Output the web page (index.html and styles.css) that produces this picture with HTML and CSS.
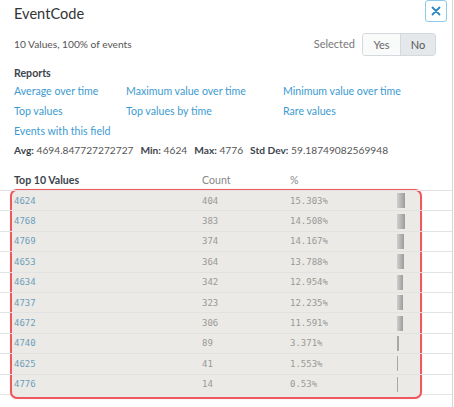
FILE: index.html
```html
<!DOCTYPE html>
<html>
<head>
<meta charset="utf-8">
<link rel="stylesheet" href="styles.css">
</head>
<body>
<div class="modal">
  <header class="head">
    <h1 class="title">EventCode</h1>
    <button class="close" aria-label="Close">
      <svg width="10" height="10" viewBox="0 0 10 10"><path d="M1.5 1.5 L8.5 8.5 M8.5 1.5 L1.5 8.5" stroke="#2b87c2" stroke-width="1.8" stroke-linecap="round"/></svg>
    </button>
  </header>
  <div class="summary">
    <span class="summary-text">10 Values, 100% of events</span>
    <div class="selected">
      <span class="selected-label">Selected</span>
      <div class="btn-group">
        <button class="btn">Yes</button>
        <button class="btn active">No</button>
      </div>
    </div>
  </div>
  <section class="reports">
    <h2 class="reports-title">Reports</h2>
    <div class="links">
      <a class="link">Average over time</a>
      <a class="link">Maximum value over time</a>
      <a class="link">Minimum value over time</a>
      <a class="link">Top values</a>
      <a class="link">Top values by time</a>
      <a class="link">Rare values</a>
      <a class="link">Events with this field</a>
    </div>
  </section>
  <div class="stats">
    <span><b>Avg:</b> 4694.847727272727</span>
    <span><b>Min:</b> 4624</span>
    <span><b>Max:</b> 4776</span>
    <span><b>Std Dev:</b> 59.18749082569948</span>
  </div>
  <div class="table">
    <div class="thead">
      <span class="th th-value">Top 10 Values</span>
      <span class="th">Count</span>
      <span class="th">%</span>
      <span class="th"></span>
    </div>
    <div class="tbody">
      <div class="highlight"></div>
      <div class="row"><span class="val">4624</span><span class="num">404</span><span class="num">15.303%</span><span class="barcell"><span class="bar" style="width:8px"></span></span></div>
      <div class="row"><span class="val">4768</span><span class="num">383</span><span class="num">14.508%</span><span class="barcell"><span class="bar" style="width:7.5px"></span></span></div>
      <div class="row"><span class="val">4769</span><span class="num">374</span><span class="num">14.167%</span><span class="barcell"><span class="bar" style="width:7px"></span></span></div>
      <div class="row"><span class="val">4653</span><span class="num">364</span><span class="num">13.788%</span><span class="barcell"><span class="bar" style="width:6.5px"></span></span></div>
      <div class="row"><span class="val">4634</span><span class="num">342</span><span class="num">12.954%</span><span class="barcell"><span class="bar" style="width:6px"></span></span></div>
      <div class="row"><span class="val">4737</span><span class="num">323</span><span class="num">12.235%</span><span class="barcell"><span class="bar" style="width:6px"></span></span></div>
      <div class="row"><span class="val">4672</span><span class="num">306</span><span class="num">11.591%</span><span class="barcell"><span class="bar" style="width:6px"></span></span></div>
      <div class="row"><span class="val">4740</span><span class="num">89</span><span class="num">3.371%</span><span class="barcell"><span class="bar thin" style="width:1.5px"></span></span></div>
      <div class="row"><span class="val">4625</span><span class="num">41</span><span class="num">1.553%</span><span class="barcell"><span class="bar thin" style="width:1px"></span></span></div>
      <div class="row"><span class="val">4776</span><span class="num">14</span><span class="num">0.53%</span><span class="barcell"><span class="bar thin" style="width:1px"></span></span></div>
    </div>
  </div>
</div>
</body>
</html>
```

FILE: styles.css
```css
* { box-sizing: border-box; }
html, body { margin: 0; padding: 0; background: #fff; }
body {
  font-family: Lato, "Open Sans", "Liberation Sans", sans-serif;
  color: #3c444d;
  font-size: 10.6px;
}
.modal {
  width: 453px;
  height: 407px;
  border-right: 1px solid #d6d6d6;
  overflow: hidden;
}
.head {
  display: flex;
  justify-content: space-between;
  align-items: flex-start;
  height: 28px;
  padding: 0 5px 0 14px;
}
.title {
  margin: 0;
  font-size: 14.6px;
  font-weight: 400;
  line-height: 27px;
  color: #333;
}
.close {
  width: 22px;
  height: 22px;
  margin: 0;
  padding: 0;
  border: 1.5px solid #8ccbeb;
  border-radius: 3px;
  background: #fff;
  display: flex;
  align-items: center;
  justify-content: center;
}
.summary {
  margin-top: 5px;
  height: 23px;
  padding: 0 16px 0 14px;
  display: flex;
  justify-content: space-between;
  align-items: center;
}
.summary-text { color: #555; margin-bottom: 2px; font-size: 10.2px; }
.selected { display: flex; align-items: center; gap: 7px; }
.selected-label { color: #777; margin-bottom: 3px; font-size: 11px; }
.btn-group {
  display: flex;
  border: 1px solid #d5d9dd;
  border-radius: 3px;
  overflow: hidden;
  height: 23px;
}
.btn {
  font: inherit;
  font-size: 11px;
  margin: 0;
  border: 0;
  background: #f9fafa;
  color: #666;
  padding: 0;
  width: 37px;
}
.btn.active {
  background: #e4e8eb;
  border-left: 1px solid #d5d9dd;
  width: 35px;
  color: #555;
}
.reports { padding: 0 14px; margin-top: 9px; }
.reports-title {
  margin: 0;
  font-size: 10.6px;
  font-weight: 700;
  line-height: 16px;
  color: #3c444d;
}
.links {
  display: grid;
  grid-template-columns: 112px 157px 1fr;
  grid-auto-rows: 20px;
  align-items: center;
}
.link { color: #3d9bd0; white-space: nowrap; }
.stats {
  padding: 0 14px;
  height: 18px;
  line-height: 18px;
  display: flex;
  gap: 7px;
  color: #555;
  white-space: nowrap;
  font-size: 10.2px;
}
.stats b { color: #3c444d; font-weight: 700; }
.table { margin-top: 10px; }
.thead, .row {
  display: grid;
  grid-template-columns: 188px 88px 107px 1fr;
  padding-left: 14px;
  width: 452px;
}
.thead { height: 21px; align-items: center; }
.th { color: #888; }
.th-value { color: #3c444d; font-weight: 700; }
.tbody { position: relative; border-bottom: 1px solid #e4e4e4; }
.highlight {
  position: absolute;
  left: 10px;
  top: -1px;
  width: 412px;
  height: 210px;
  border: 2px solid #ec5a5f;
  border-radius: 7px;
  background: #ebeae6;
  box-shadow: 0 0 1px rgba(236,90,95,0.5);
}
.row {
  position: relative;
  height: 20.4px;
  border-top: 1px solid #e2e2e2;
  align-items: center;
  font-family: "DejaVu Sans Mono", "Liberation Mono", monospace;
  font-size: 9px;
}
.val { color: #6d9ebb; }
.num { color: #999; }
.barcell { display: flex; align-items: center; height: 100%; }
.bar {
  display: block;
  height: 15px;
  background: linear-gradient(to right, #cfcfcf, #9c9c9c);
}
.bar.thin { background: #a8a8a8; }
```
